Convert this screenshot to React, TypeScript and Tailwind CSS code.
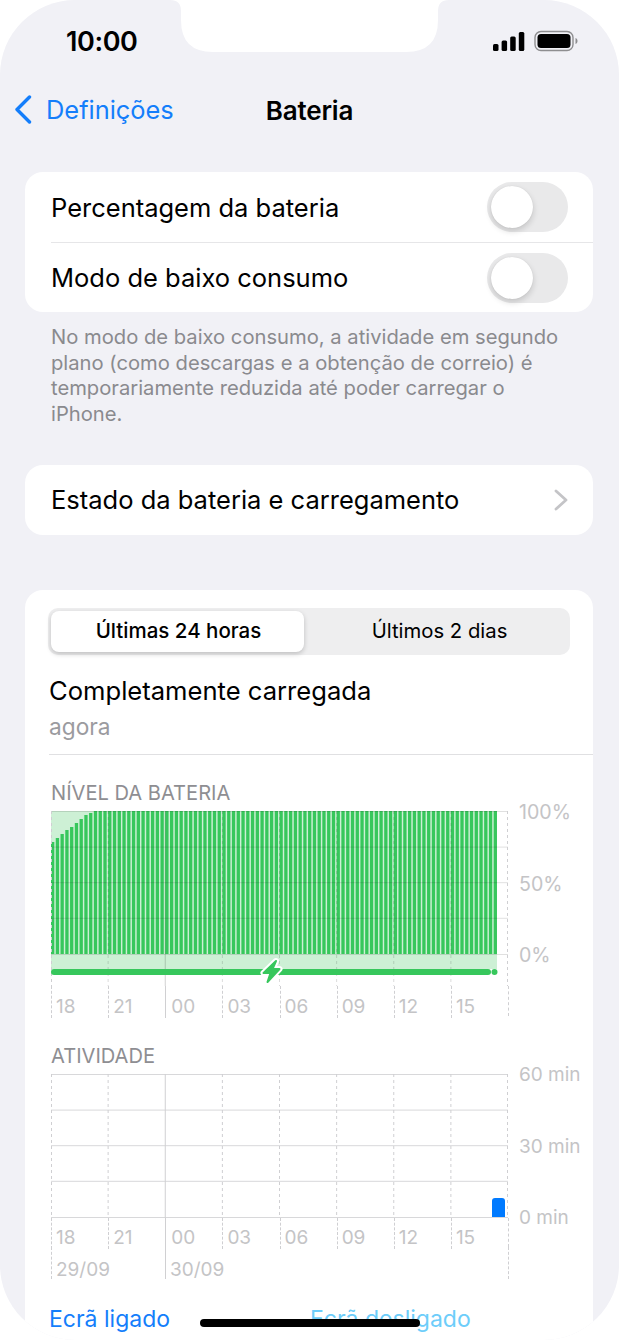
import React from "react";

const P = 57.125;
const W = 457;

function Toggle() {
  return (
    <div className="w-[81px] h-[50px] rounded-full bg-[#e9e9ea] p-[4px]">
      <div className="w-[42px] h-[42px] rounded-full bg-white shadow-[0_3px_6px_rgba(0,0,0,0.16),0_0_1px_rgba(0,0,0,0.12)]" />
    </div>
  );
}

function Signal() {
  return (
    <svg width="32" height="19" viewBox="0 0 32 19">
      <rect x="0" y="12" width="5.5" height="7" rx="1.5" fill="#000" />
      <rect x="8.6" y="8.5" width="5.5" height="10.5" rx="1.5" fill="#000" />
      <rect x="17.2" y="4.5" width="5.5" height="14.5" rx="1.5" fill="#000" />
      <rect x="25.8" y="0" width="5.5" height="19" rx="1.5" fill="#000" />
    </svg>
  );
}

function Battery() {
  return (
    <svg width="44" height="22" viewBox="0 0 44 22">
      <rect x="1" y="1.5" width="38" height="19" rx="6" fill="none" stroke="#8e8e90" strokeWidth="1.4" />
      <rect x="3.5" y="4" width="33" height="14" rx="3.5" fill="#000" />
      <path d="M41.5 8 C43 8.6 43.5 9.6 43.5 11 C43.5 12.4 43 13.4 41.5 14 Z" fill="#8e8e90" />
    </svg>
  );
}

function BatteryPlot() {
  const bars = Array.from({ length: 94 }, (_, i) => {
    const rise = [842, 838, 834, 830, 827, 823, 819, 815, 813];
    const top = i < rise.length ? rise[i] - 811 : 0;
    return { x: i * 4.76, top };
  });
  const lines = [0, 35.6, 71.2, 106.8, 143];
  const vs = [P, P * 3, P * 4, P * 5, P * 6, P * 7];
  const bolt = "M225 150 L212.5 162 L219.5 162 L216.5 171 L228.5 158 L221.5 158 Z";
  return (
    <svg width={W + 1} height="175" viewBox="0 0 458 175" className="block">
      <rect x="0" y="0" width="446" height="158" fill="#cdf0d5" />
      {bars.map((b, i) => (
        <rect key={i} x={b.x} y={b.top} width="3.3" height={143 - b.top} fill="#37c75c" />
      ))}
      {lines.map((y, i) => (
        <line key={i} x1="0" x2="457" y1={y + 0.5} y2={y + 0.5} stroke="#000" strokeOpacity="0.12" />
      ))}
      <line x1="0.5" x2="0.5" y1="0" y2="175" stroke="#cfcfd2" strokeDasharray="3 3" />
      {vs.map((x, i) => (
        <line key={i} x1={x} x2={x} y1="0" y2="175" stroke="#000" strokeOpacity="0.14" strokeDasharray="3 3" />
      ))}
      <line x1={P * 2} x2={P * 2} y1="0" y2="175" stroke="#000" strokeOpacity="0.18" />
      <line x1="456.5" x2="456.5" y1="0" y2="175" stroke="#cfcfd2" strokeDasharray="3 3" />
      <rect x="0" y="158" width="440" height="6" rx="3" fill="#37c75c" />
      <circle cx="443.5" cy="161" r="3" fill="#37c75c" />
      <path d={bolt} fill="#fff" stroke="#fff" strokeWidth="6" strokeLinejoin="round" />
      <path d={bolt} fill="#37c75c" stroke="#37c75c" strokeWidth="2" strokeLinejoin="round" />
    </svg>
  );
}

function ActivityPlot() {
  const lines = [0, 35.6, 71.2, 106.8, 143];
  const vs = [P, P * 3, P * 4, P * 5, P * 6, P * 7];
  return (
    <svg width={W + 1} height="144" viewBox="0 0 458 144" className="block">
      {lines.map((y, i) => (
        <line key={i} x1="0" x2="457" y1={y + 0.5} y2={y + 0.5} stroke="#d8d8da" />
      ))}
      <line x1="0.5" x2="0.5" y1="0" y2="144" stroke="#cfcfd2" strokeDasharray="3 3" />
      {vs.map((x, i) => (
        <line key={i} x1={x} x2={x} y1="0" y2="144" stroke="#cfcfd2" strokeDasharray="3 3" />
      ))}
      <line x1={P * 2} x2={P * 2} y1="0" y2="144" stroke="#d0d0d2" />
      <line x1="456.5" x2="456.5" y1="0" y2="144" stroke="#cfcfd2" strokeDasharray="3 3" />
      <path d="M441 143 L441 127 Q441 124 444 124 L451 124 Q454 124 454 127 L454 143 Z" fill="#007aff" />
    </svg>
  );
}

function HourRow({ h, pt }: { h: string; pt: string }) {
  const hours = ["18", "21", "00", "03", "06", "09", "12", "15"];
  return (
    <div className={`grid grid-cols-8 w-[458px] ${h} border-r border-dashed border-[#cfcfd2]`}>
      {hours.map((t, i) => (
        <div
          key={t}
          className={
            i === 2
              ? "border-l border-solid border-[#d0d0d2] pl-[5px] text-[19px] leading-[23px] text-[#c4c4c6]"
              : "border-l border-dashed border-[#cfcfd2] pl-[4px] text-[19px] leading-[23px] text-[#c4c4c6]"
          }
        >
          <div className={pt}>{t}</div>
        </div>
      ))}
    </div>
  );
}

export default function App() {
  return (
    <div className="relative w-[619px] h-[1340px] bg-white overflow-hidden font-['Inter','Liberation_Sans',sans-serif] text-black">
      <div className="relative w-[619px] h-[1340px] bg-[#f1f1f6] rounded-[75px] overflow-hidden flex flex-col">
        <svg width="300" height="53" viewBox="0 0 300 53" className="absolute left-[160px] top-0">
          <path
            d="M10 0 Q21 0 21 11 L21 20 Q21 52 53 52 L246 52 Q278 52 278 20 L278 11 Q278 0 289 0 Z"
            fill="#fff"
          />
        </svg>

        <div className="h-[82px] flex items-center justify-between pl-[66px] pr-[41px] shrink-0">
          <div className="text-[27px] font-semibold tracking-[-0.4px] pt-[2px]">10:00</div>
          <div className="flex items-center gap-[9px]">
            <Signal />
            <Battery />
          </div>
        </div>

        <div className="relative h-[56px] flex items-center justify-center shrink-0">
          <div className="absolute left-[14px] top-[13px] flex items-center gap-[14px] text-[#147efb]">
            <svg width="18" height="29" viewBox="0 0 18 29">
              <path d="M15.5 2 L3 14.5 L15.5 27" fill="none" stroke="currentColor" strokeWidth="3.4" strokeLinecap="round" strokeLinejoin="round" />
            </svg>
            <span className="text-[25.4px] leading-[28px]">Definições</span>
          </div>
          <span className="text-[26px] font-semibold tracking-[-0.2px]">Bateria</span>
        </div>

        <div className="mt-[34px] mx-[25px] w-[568px] h-[140px] bg-white rounded-[18px] shrink-0">
          <div className="h-[70px] flex items-center justify-between pl-[26px] pr-[25px] ">
            <span className="text-[25.5px] pt-[3px]">Percentagem da bateria</span>
            <Toggle />
          </div>
          <div className="ml-[26px] h-px bg-[#e6e6e8]" />
          <div className="h-[69px] flex items-center justify-between pl-[26px] pr-[25px]">
            <span className="text-[25.5px] pt-[2px]">Modo de baixo consumo</span>
            <Toggle />
          </div>
        </div>

        <div className="mt-[12px] mx-[51px] w-[515px] text-[20.2px] leading-[25.5px] text-[#8a8a8e]">
          No modo de baixo consumo, a atividade em segundo plano (como descargas e a obtenção de correio) é temporariamente reduzida até poder carregar o iPhone.
        </div>

        <div className="mt-[39px] mx-[25px] w-[568px] h-[70px] bg-white rounded-[18px] flex items-center justify-between pl-[26px] pr-[25px] shrink-0">
          <span className="text-[25.5px]">Estado da bateria e carregamento</span>
          <svg width="14" height="22" viewBox="0 0 14 22">
            <path d="M2 2 L12 11 L2 20" fill="none" stroke="#c4c4c7" strokeWidth="2.8" strokeLinecap="round" strokeLinejoin="round" />
          </svg>
        </div>

        <div className="mt-[55px] mx-[25px] w-[568px] flex-1 bg-white rounded-t-[18px] pt-[18px]">
          <div className="ml-[23px] w-[522px] h-[47px] rounded-[10px] bg-[#eeeeef] p-[3px] flex">
            <div className="w-[253px] h-[41px] rounded-[8px] bg-white shadow-[0_2px_5px_rgba(0,0,0,0.2)] flex items-center justify-center text-[20.5px] font-medium pl-[2px]">
              Últimas 24 horas
            </div>
            <div className="flex-1 flex items-center justify-center text-[20.3px] pl-[8px]">Últimos 2 dias</div>
          </div>
          <div className="ml-[24px] mt-[19px] text-[25.6px] leading-[34px]">Completamente carregada</div>
          <div className="ml-[24px] mt-[2px] text-[22.7px] leading-[34px] text-[#9b9b9f]">agora</div>
          <div className="ml-[24px] mt-[10px] h-px bg-[#e0e0e2]" />

          <div className="ml-[26px] mt-[25px] text-[20.1px] leading-[26px] text-[#8e8e92]">NÍVEL DA BATERIA</div>
          <div className="ml-[26px] mt-[5px] flex">
            <div className="w-[458px] shrink-0">
              <BatteryPlot />
              <HourRow h="h-[30px]" pt="pt-[9px]" />
            </div>
            <div className="ml-[10px] -mt-[11px] h-[167px] flex flex-col justify-between text-[19.6px] leading-[24px] text-[#c4c4c6]">
              <div>100%</div>
              <div>50%</div>
              <div>0%</div>
            </div>
          </div>

          <div className="ml-[26px] mt-[27px] text-[20.1px] leading-[26px] text-[#8e8e92]">ATIVIDADE</div>
          <div className="ml-[26px] mt-[5px] flex">
            <div className="w-[458px] shrink-0">
              <ActivityPlot />
              <HourRow h="h-[29px]" pt="pt-[8px]" />
              <div className="flex w-[458px] h-[32px] border-r border-dashed border-[#cfcfd2]">
                <div className="w-[114px] border-l border-dashed border-[#cfcfd2] pl-[4px] pt-[11px] text-[19px] leading-[23px] text-[#c4c4c6]">29/09</div>
                <div className="border-l border-solid border-[#d0d0d2] pl-[4px] pt-[11px] text-[19px] leading-[23px] text-[#c4c4c6]">30/09</div>
              </div>
            </div>
            <div className="ml-[10px] -mt-[11px] h-[167px] flex flex-col justify-between text-[19px] leading-[24px] text-[#c4c4c6]">
              <div>60 min</div>
              <div>30 min</div>
              <div>0 min</div>
            </div>
          </div>

          <div className="ml-[24px] mt-[26px] flex text-[23px] leading-[28px]">
            <div className="w-[261px] text-[#147efb]">Ecrã ligado</div>
            <div className="text-[#6dcdfa]">Ecrã desligado</div>
          </div>
        </div>
      </div>
      <div className="absolute left-[200px] top-[1319px] w-[220px] h-[8px] rounded-full bg-black" />
    </div>
  );
}
